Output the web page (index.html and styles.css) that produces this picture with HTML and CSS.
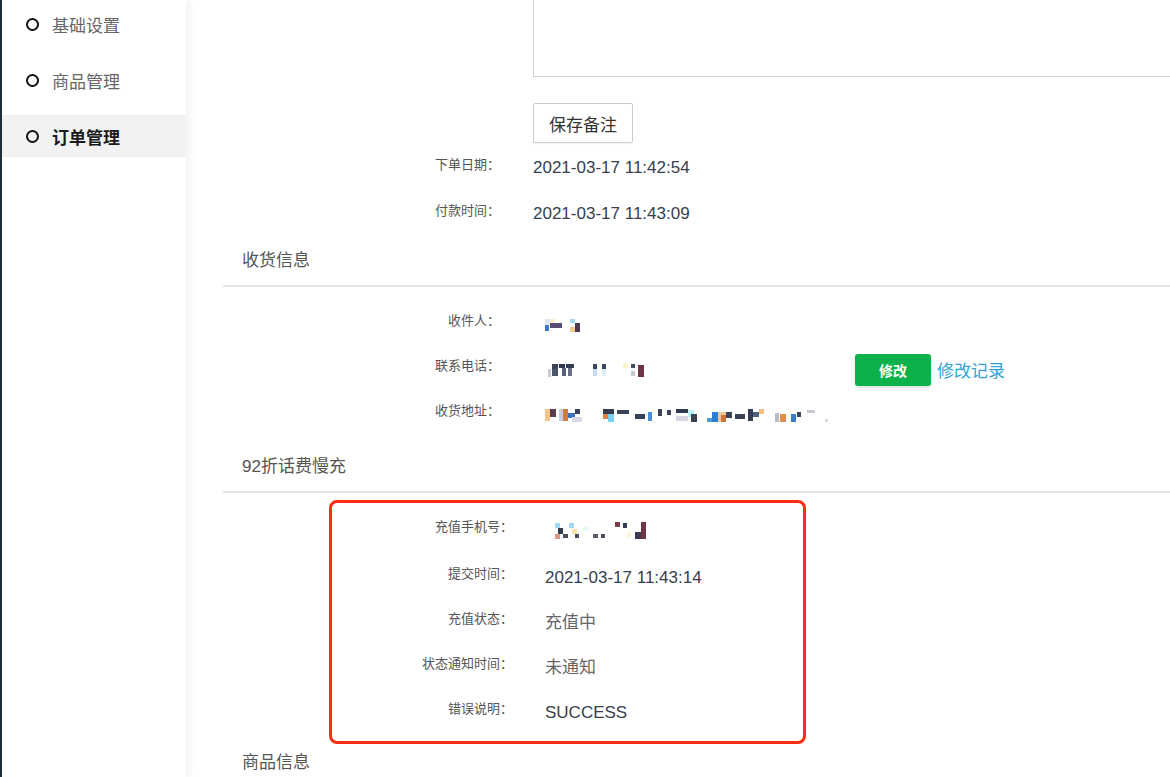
FILE: index.html
```html
<!DOCTYPE html>
<html lang="zh-CN">
<head>
<meta charset="utf-8">
<title>订单详情</title>
<link rel="stylesheet" href="styles.css">
</head>
<body>
<div class="layout">
  <div class="edge"></div>
  <aside class="sidebar">
    <a class="nav-item"><span class="dot"></span>基础设置</a>
    <a class="nav-item"><span class="dot"></span>商品管理</a>
    <a class="nav-item active"><span class="dot"></span>订单管理</a>
  </aside>
  <main class="main">
    <div class="content">
      <div class="remark-box"></div>
      <div class="remark-actions"><button class="btn">保存备注</button></div>

      <div class="order-times">
        <div class="row"><div class="label">下单日期：</div><div class="value">2021-03-17 11:42:54</div></div>
        <div class="row"><div class="label">付款时间：</div><div class="value">2021-03-17 11:43:09</div></div>
      </div>

      <div class="section-title">收货信息</div>
      <div class="section-body">
        <div class="row tight"><div class="label">收件人：</div>
          <div class="value">
            <svg class="blur" width="40" height="16" viewBox="0 0 40 16">
              <rect x="0" y="2" width="5" height="6" fill="#dfe6f4"/>
              <rect x="5" y="2" width="5" height="4" fill="#fbefc9"/>
              <rect x="0" y="8" width="4" height="6" fill="#3b78c6"/>
              <rect x="5" y="6" width="12" height="5" fill="#5b4a78"/>
              <rect x="25" y="2" width="5" height="4" fill="#a3d9f5"/>
              <rect x="25" y="10" width="5" height="5" fill="#f5c98c"/>
              <rect x="30" y="6" width="5" height="9" fill="#4c3a4c"/>
            </svg>
          </div>
        </div>
        <div class="row tight"><div class="label">联系电话：</div>
          <div class="value phone">
            <svg class="blur" width="104" height="18" viewBox="0 0 104 18">
              <rect x="0" y="8" width="3" height="8" fill="#c9ccd6"/>
              <rect x="4" y="3" width="6" height="5" fill="#3a4357"/>
              <rect x="4" y="8" width="6" height="7" fill="#4b5468"/>
              <rect x="11" y="3" width="6" height="4" fill="#2f3a52"/>
              <rect x="18" y="3" width="8" height="4" fill="#333c55"/>
              <rect x="14" y="7" width="4" height="8" fill="#596079"/>
              <rect x="20" y="7" width="4" height="8" fill="#6a7085"/>
              <rect x="45" y="3" width="4" height="5" fill="#3e4659"/>
              <rect x="45" y="8" width="4" height="7" fill="#c6dcf5"/>
              <rect x="54" y="3" width="4" height="5" fill="#3d4658"/>
              <rect x="54" y="8" width="4" height="7" fill="#dbeefb"/>
              <rect x="75" y="2" width="5" height="5" fill="#fdf2cf"/>
              <rect x="83" y="3" width="4" height="4" fill="#4a4f5f"/>
              <rect x="83" y="10" width="4" height="5" fill="#c7c7d0"/>
              <rect x="90" y="4" width="6" height="12" fill="#6d3645"/>
            </svg>
          </div>
          <button class="btn-green">修改</button>
          <a class="link">修改记录</a>
        </div>
        <div class="row tight"><div class="label">收货地址：</div>
          <div class="value">
            <svg class="blur" width="292" height="18" viewBox="0 0 292 18">
              <rect x="0" y="3" width="5" height="12" fill="#f6c48a"/>
              <rect x="5" y="3" width="6" height="8" fill="#5d3b4e"/>
              <rect x="14" y="3" width="4" height="12" fill="#c7cce0"/>
              <rect x="18" y="3" width="5" height="12" fill="#d17b3e"/>
              <rect x="23" y="7" width="7" height="5" fill="#3e6fb8"/>
              <rect x="30" y="3" width="5" height="5" fill="#3d3f5f"/>
              <rect x="27" y="11" width="10" height="5" fill="#d6d9e3"/>
              <rect x="58" y="3" width="11" height="5" fill="#343c52"/>
              <rect x="58" y="8" width="5" height="5" fill="#e57f3f"/>
              <rect x="63" y="8" width="6" height="8" fill="#7bd1f2"/>
              <rect x="72" y="4" width="12" height="4" fill="#3a4358"/>
              <rect x="90" y="8" width="10" height="5" fill="#344056"/>
              <rect x="103" y="6" width="4" height="9" fill="#4a8fd4"/>
              <rect x="113" y="3" width="4" height="7" fill="#3b455a"/>
              <rect x="122" y="4" width="4" height="5" fill="#3d4658"/>
              <rect x="131" y="3" width="12" height="4" fill="#2f3a50"/>
              <rect x="131" y="10" width="12" height="5" fill="#d6d6e2"/>
              <rect x="143" y="4" width="6" height="7" fill="#baf0fb"/>
              <rect x="146" y="8" width="6" height="8" fill="#3b4256"/>
              <rect x="162" y="12" width="5" height="4" fill="#4b9cd8"/>
              <rect x="167" y="6" width="6" height="10" fill="#2a7fd0"/>
              <rect x="173" y="6" width="8" height="10" fill="#f2c99b"/>
              <rect x="176" y="9" width="5" height="7" fill="#d0733a"/>
              <rect x="181" y="6" width="6" height="6" fill="#394359"/>
              <rect x="190" y="8" width="10" height="5" fill="#3a4254"/>
              <rect x="203" y="3" width="5" height="12" fill="#353d52"/>
              <rect x="214" y="3" width="5" height="5" fill="#f3c07e"/>
              <rect x="208" y="6" width="6" height="5" fill="#4f6385"/>
              <rect x="230" y="7" width="4" height="9" fill="#b9bcc6"/>
              <rect x="235" y="8" width="6" height="8" fill="#dd8e45"/>
              <rect x="246" y="8" width="5" height="8" fill="#3a7ccb"/>
              <rect x="252" y="6" width="4" height="5" fill="#3b4459"/>
              <rect x="262" y="4" width="8" height="3" fill="#c8cad2"/>
              <rect x="280" y="13" width="3" height="3" fill="#d6d8e0"/>
            </svg>
          </div>
        </div>
      </div>

      <div class="section-title">92折话费慢充</div>
      <div class="highlight">
        <div class="row first"><div class="label">充值手机号：</div>
          <div class="value">
            <svg class="blur" width="96" height="20" viewBox="0 0 96 20">
              <rect x="0" y="3" width="5" height="5" fill="#9fd6f3"/>
              <rect x="3" y="8" width="5" height="6" fill="#343b50"/>
              <rect x="0" y="14" width="5" height="5" fill="#d79a82"/>
              <rect x="8" y="14" width="5" height="4" fill="#4a4d5e"/>
              <rect x="14" y="3" width="5" height="5" fill="#a2d8f5"/>
              <rect x="17" y="9" width="5" height="5" fill="#fde2b0"/>
              <rect x="20" y="14" width="4" height="4" fill="#434a5c"/>
              <rect x="28" y="6" width="5" height="5" fill="#eaf8fd"/>
              <rect x="38" y="14" width="5" height="4" fill="#5b5b6b"/>
              <rect x="46" y="14" width="4" height="4" fill="#4b4f62"/>
              <rect x="60" y="2" width="5" height="5" fill="#7b3e4b"/>
              <rect x="68" y="3" width="4" height="5" fill="#363d55"/>
              <rect x="72" y="12" width="4" height="6" fill="#fdf6de"/>
              <rect x="80" y="12" width="6" height="7" fill="#3b3b58"/>
              <rect x="86" y="2" width="5" height="17" fill="#6e3644"/>
            </svg>
          </div>
        </div>
        <div class="row"><div class="label">提交时间：</div><div class="value">2021-03-17 11:43:14</div></div>
        <div class="row"><div class="label">充值状态：</div><div class="value muted">充值中</div></div>
        <div class="row"><div class="label">状态通知时间：</div><div class="value muted">未通知</div></div>
        <div class="row"><div class="label">错误说明：</div><div class="value">SUCCESS</div></div>
      </div>

      <div class="section-title last">商品信息</div>
    </div>
  </main>
</div>
</body>
</html>
```

FILE: styles.css
```css
* { box-sizing: border-box; }
html, body {
  margin: 0;
  padding: 0;
  background: #fff;
  font-family: "Liberation Sans", "Noto Sans CJK SC", sans-serif;
  color: #333;
}
.layout {
  display: flex;
  width: 1170px;
  height: 777px;
  overflow: hidden;
}
.edge {
  width: 2px;
  flex: none;
  background: #1f2d3d;
}
.sidebar {
  width: 184px;
  flex: none;
  background: #fff;
  padding-top: 3px;
  display: flex;
  flex-direction: column;
  gap: 14px;
  box-shadow: 3px 0 8px rgba(0, 0, 0, 0.06);
  position: relative;
  z-index: 1;
}
.nav-item {
  height: 42px;
  display: flex;
  align-items: center;
  padding-left: 24px;
  font-size: 17px;
  color: #666;
  text-decoration: none;
}
.nav-item.active {
  background: #f2f2f2;
  color: #1a1a1a;
  font-weight: bold;
  border-top: 1px solid #ececf2;
  border-bottom: 1px solid #ececf2;
}
.dot {
  width: 13px;
  height: 13px;
  border: 2px solid #111;
  border-radius: 50%;
  margin-right: 13px;
  flex: none;
}
.main {
  flex: 1;
  overflow: hidden;
  background: #fff;
}
.content {
  margin-left: 37px;
  width: 1000px;
}
.remark-box {
  margin-left: 310px;
  width: 700px;
  height: 77px;
  border: 1px solid #cfcfcf;
  border-top: none;
}
.remark-actions {
  margin-left: 310px;
  padding-top: 26px;
}
.btn {
  width: 100px;
  height: 40px;
  background: #fff;
  border: 1px solid #cdcdcd;
  border-radius: 2px;
  box-shadow: 0 1px 1px rgba(0, 0, 0, 0.06);
  font-family: "Liberation Sans", "Noto Sans CJK SC", sans-serif;
  font-size: 17px;
  color: #333;
  padding: 0;
  display: block;
}
.order-times { padding-top: 2px; }
.row {
  height: 46px;
  display: flex;
  align-items: center;
}
.row.tight { height: 45px; }
.label {
  width: 277px;
  flex: none;
  text-align: right;
  font-size: 13px;
  line-height: 18px;
  color: #555;
  margin-bottom: 7px;
  white-space: nowrap;
}
.value {
  margin-left: 33px;
  font-size: 17px;
  line-height: 22px;
  color: #36404e;
  white-space: nowrap;
}
.value.muted { color: #666; }
.value.phone { width: 322px; flex: none; }
.blur { display: block; margin-left: 12px; }
.phone .blur { margin-left: 15px; }
.highlight .blur { margin-left: 10px; }
.btn-green {
  width: 76px;
  height: 32px;
  border: none;
  border-radius: 3px;
  background: #0bb24a;
  box-shadow: 0 2px 3px rgba(0, 0, 0, 0.12);
  color: #fff;
  font-family: "Liberation Sans", "Noto Sans CJK SC", sans-serif;
  font-size: 14px;
  font-weight: bold;
  padding: 0;
}
.link {
  margin-left: 6px;
  font-size: 17px;
  color: #34a3d3;
  text-decoration: none;
}
.section-title {
  padding: 12px 0 12px 19px;
  font-size: 17px;
  line-height: 24px;
  color: #555;
  border-bottom: 2px solid #e6e6e6;
}
.section-body { padding-top: 15px; padding-bottom: 1px; }
.section-body + .section-title { padding-top: 17px; padding-bottom: 12px; }
.highlight {
  margin-top: 7px;
  margin-left: 106px;
  width: 477px;
  border: 3px solid #fa2c12;
  border-radius: 8px;
  padding: 2px 0 6px;
}
.highlight .row { height: 45px; }
.highlight .row.first { height: 50px; }
.highlight .label { width: 181px; }
.highlight .value { margin-left: 32px; }
.section-title.last {
  border-bottom: none;
  padding-top: 7px;
}
```
